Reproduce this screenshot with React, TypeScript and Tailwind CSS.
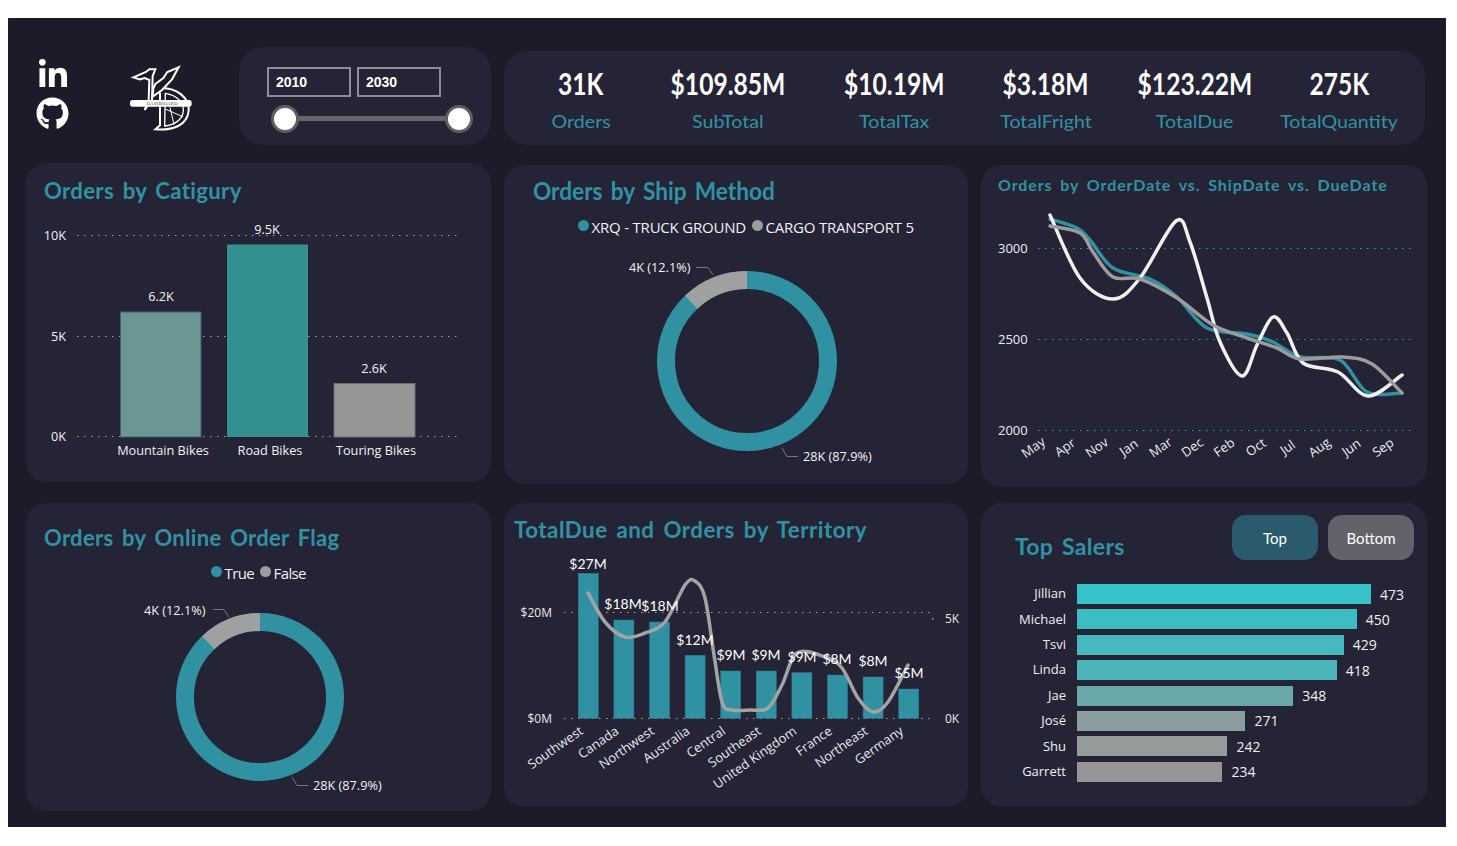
import { FaGithub, FaLinkedinIn } from "react-icons/fa";

type Pt = [number, number];

const TEAL = "#3091a3";
const GREY = "#9c9c9c";

const kpis = [
  { value: "31K", label: "Orders", width: "w-[147px]" },
  { value: "$109.85M", label: "SubTotal", width: "w-[147px]" },
  { value: "$10.19M", label: "TotalTax", width: "w-[185px]" },
  { value: "$3.18M", label: "TotalFright", width: "w-[119px]" },
  { value: "$123.22M", label: "TotalDue", width: "w-[179px]" },
  { value: "275K", label: "TotalQuantity", width: "w-[109px]" },
];

const salers = [
  { name: "Jillian", value: 473, color: "#37c3c9" },
  { name: "Michael", value: 450, color: "#3cbdc3" },
  { name: "Tsvi", value: 429, color: "#45b8c0" },
  { name: "Linda", value: 418, color: "#4bb5b9" },
  { name: "Jae", value: 348, color: "#69a8a8" },
  { name: "José", value: 271, color: "#8a9e9f" },
  { name: "Shu", value: 242, color: "#959a9b" },
  { name: "Garrett", value: 234, color: "#969696" },
];

const territories = [
  { name: "Southwest", top: 573.3, label: "$27M", lx: 588, ly: 564 },
  { name: "Canada", top: 620, label: "$18M", lx: 623, ly: 604 },
  { name: "Northwest", top: 622, label: "$18M", lx: 660, ly: 606 },
  { name: "Australia", top: 655.3, label: "$12M", lx: 695, ly: 640 },
  { name: "Central", top: 671, label: "$9M", lx: 731, ly: 655 },
  { name: "Southeast", top: 671, label: "$9M", lx: 766, ly: 655 },
  { name: "United Kingdom", top: 672.7, label: "$9M", lx: 802, ly: 657 },
  { name: "France", top: 675, label: "$8M", lx: 837, ly: 659 },
  { name: "Northeast", top: 677, label: "$8M", lx: 873, ly: 661 },
  { name: "Germany", top: 689, label: "$5M", lx: 909, ly: 673 },
];

const months = ["May", "Apr", "Nov", "Jan", "Mar", "Dec", "Feb", "Oct", "Jul", "Aug", "Jun", "Sep"];

const whiteLine: Pt[] = [[1050, 215], [1080, 278], [1113, 299], [1140, 278], [1176, 221], [1190, 242], [1207, 298], [1220, 342], [1242, 376], [1257, 345], [1273, 317], [1287, 333], [1303, 363], [1338, 372], [1368, 396], [1402, 375]];
const tealLine: Pt[] = [[1050, 219], [1077, 228], [1090, 240], [1113, 268], [1150, 279], [1177, 297], [1207, 328], [1247, 334], [1273, 342], [1300, 357], [1340, 360], [1367, 392], [1402, 393]];
const greyLine: Pt[] = [[1050, 226], [1080, 233], [1093, 252], [1113, 277], [1140, 279], [1177, 298], [1213, 325], [1247, 338], [1277, 348], [1300, 359], [1343, 357], [1372, 364], [1402, 393]];
const territoryLine: Pt[] = [[588, 593], [605, 622], [625, 637], [645, 633], [665, 622], [685, 585], [695, 581], [705, 598], [714, 655], [722, 702], [731, 710], [750, 710], [768, 708], [782, 685], [797, 653], [825, 657], [842, 668], [858, 698], [873, 712], [888, 702], [908, 665]];

// catmull-rom through the points, written out as cubic segments
function smooth(points: Pt[]) {
  let d = `M${points[0][0]} ${points[0][1]}`;
  for (let i = 0; i < points.length - 1; i++) {
    const p0 = points[Math.max(i - 1, 0)];
    const p1 = points[i];
    const p2 = points[i + 1];
    const p3 = points[Math.min(i + 2, points.length - 1)];
    d += ` C${p1[0] + (p2[0] - p0[0]) / 6} ${p1[1] + (p2[1] - p0[1]) / 6} ${p2[0] - (p3[0] - p1[0]) / 6} ${p2[1] - (p3[1] - p1[1]) / 6} ${p2[0]} ${p2[1]}`;
  }
  return d;
}

function Title({ children, className }: { children: string; className: string }) {
  return (
    <h2 className={`font-bold text-[#2f93a3] whitespace-nowrap origin-left [font-family:Lato,sans-serif] ${className}`}>
      {children}
    </h2>
  );
}

function Dot({ color }: { color: string }) {
  return <span className="w-[11px] h-[11px] rounded-full shrink-0 -mt-[3px]" style={{ background: color }} />;
}

function Donut({ cx, cy, r, width }: { cx: number; cy: number; r: number; width: number }) {
  const a = (12.1 / 100) * 2 * Math.PI;
  return (
    <g fill="none" strokeWidth={width}>
      <circle cx={cx} cy={cy} r={r} stroke={TEAL} />
      <path
        d={`M${cx} ${cy - r} A${r} ${r} 0 0 0 ${cx - r * Math.sin(a)} ${cy - r * Math.cos(a)}`}
        stroke="#9fa1a0"
      />
    </g>
  );
}

function Logo() {
  return (
    <svg viewBox="0 0 300 270" className="w-[100px] h-[90px] mt-[3px] ml-[41px] shrink-0">
      <g fill="#1c1b29" stroke="#fff" strokeWidth="6" strokeLinejoin="miter">
        <path d="M136 115 C205 106 240 150 236 182 C232 226 190 242 136 238 L150 226 L150 130 Z" />
        <path d="M166 130 C204 136 222 160 220 184 C216 212 190 226 164 228 Z" strokeWidth="4" />
        <path d="M70 82 L108 66 L118 58 L136 58 L128 78 L126 150 L104 180 L116 150 L118 90 L104 84 L90 88 Z" />
        <path d="M136 102 L160 84 L172 66 L206 52 L186 88 L156 120 L128 140 L130 116 Z" />
      </g>
      <path d="M168 178 L218 200 M180 172 L192 224" fill="none" stroke="#fff" strokeWidth="3" />
      <rect x="60" y="150" width="185" height="20" rx="8" fill="#fff" />
      <text x="156" y="166" textAnchor="middle" fontSize="15" fill="#55535c" className="[font-family:'Liberation_Serif',serif]">
        DASHBOARD
      </text>
    </svg>
  );
}

function CategoryChart() {
  return (
    <svg viewBox="26 219 465 263" className="block w-[465px] h-[263px] text-[12.7px] [font-family:'Open_Sans',sans-serif]">
      {[235.5, 336.5, 436.5].map((y) => (
        <line key={y} x1="77" x2="458" y1={y} y2={y} stroke="#a5a5ab" strokeDasharray="1.5 5.5" />
      ))}
      <rect x="120.5" y="312" width="80.5" height="125" fill="#6a9694" stroke="#47606a" />
      <rect x="227" y="244.5" width="81" height="192.5" fill="#33928f" />
      <rect x="334" y="383.5" width="81" height="53.5" fill="#969696" stroke="#6e6e72" />
      <g fill="#f2f2f2" textAnchor="end">
        <text x="66" y="240">10K</text>
        <text x="66" y="341">5K</text>
        <text x="66" y="441">0K</text>
      </g>
      <g fill="#f2f2f2" textAnchor="middle">
        <text x="161" y="301">6.2K</text>
        <text x="267" y="234">9.5K</text>
        <text x="374" y="373">2.6K</text>
        <text x="163" y="455">Mountain Bikes</text>
        <text x="270" y="455">Road Bikes</text>
        <text x="376" y="455">Touring Bikes</text>
      </g>
    </svg>
  );
}

function ShipChart() {
  return (
    <svg viewBox="504 237 464 247" className="block w-[464px] h-[247px] text-[12.7px] [font-family:'Open_Sans',sans-serif]">
      <Donut cx={747} cy={361} r={81} width={18} />
      <g fill="none" stroke="#77767d">
        <path d="M696 267.5 H708 L713 275" />
        <path d="M782 448 L787 456.5 H798" />
      </g>
      <g fill="#f2f2f2">
        <text x="629" y="272">4K (12.1%)</text>
        <text x="803" y="461">28K (87.9%)</text>
      </g>
    </svg>
  );
}

function DateChart() {
  return (
    <svg viewBox="981 205 446 282" className="block w-[446px] h-[282px] text-[13px] [font-family:'Open_Sans',sans-serif]">
      {[248.5, 339.5, 430.5].map((y) => (
        <line key={y} x1="1038" x2="1411" y1={y} y2={y} stroke="#2fa8ac" strokeDasharray="1.5 5.5" />
      ))}
      <g fill="none" strokeWidth="3.5" strokeLinecap="round">
        <path d={smooth(tealLine)} stroke={TEAL} />
        <path d={smooth(whiteLine)} stroke="#f0f0f0" />
        <path d={smooth(greyLine)} stroke={GREY} />
      </g>
      <g fill="#e8eef2">
        <text x="998" y="253">3000</text>
        <text x="998" y="344">2500</text>
        <text x="998" y="435">2000</text>
      </g>
      <g fill="#e8eef2" textAnchor="middle">
        {months.map((m, i) => {
          const x = 1033 + i * 31.8;
          return (
            <text key={m} x={x} y={452} transform={`rotate(-35 ${x} 447)`}>
              {m}
            </text>
          );
        })}
      </g>
    </svg>
  );
}

function OnlineChart() {
  return (
    <svg viewBox="26 583 465 228" className="block w-[465px] h-[228px] text-[12.7px] [font-family:'Open_Sans',sans-serif]">
      <Donut cx={260} cy={697} r={75} width={18} />
      <g fill="none" stroke="#77767d">
        <path d="M213 609.5 H224 L229 617" />
        <path d="M292 777 L297 785.5 H308" />
      </g>
      <g fill="#f2f2f2">
        <text x="144" y="615">4K (12.1%)</text>
        <text x="313" y="790">28K (87.9%)</text>
      </g>
    </svg>
  );
}

function TerritoryChart() {
  return (
    <svg viewBox="504 552 464 254" className="block w-[464px] h-[254px] text-[13px] [font-family:'Open_Sans',sans-serif]">
      <line x1="564" x2="932" y1="612.5" y2="612.5" stroke="#a5a5ab" strokeDasharray="1.5 5.5" />
      <line x1="564" x2="934" y1="718.5" y2="718.5" stroke="#a5a5ab" strokeDasharray="1.5 5.5" />
      <rect x="932" y="618" width="1.5" height="1.5" fill="#a5a5ab" />
      {territories.map((t, i) => (
        <rect
          key={t.name}
          x={578.3 + i * 35.6}
          y={t.top}
          width="20"
          height={718.3 - t.top}
          fill={TEAL}
          stroke="#2b7f90"
          strokeWidth="0.5"
        />
      ))}
      <path d={smooth(territoryLine)} fill="none" stroke="#a3a3a3" strokeWidth="3.5" strokeLinecap="round" />
      <g fill="#e8e8e8" className="text-[12px]">
        <text x="552" y="617" textAnchor="end">$20M</text>
        <text x="552" y="723" textAnchor="end">$0M</text>
        <text x="945" y="623">5K</text>
        <text x="945" y="723">0K</text>
      </g>
      <g fill="#fff" textAnchor="middle" className="text-[14px] [font-family:Lato,sans-serif]">
        {territories.map((t) => (
          <text key={t.name + t.lx} x={t.lx} y={t.ly + 5}>
            {t.label}
          </text>
        ))}
      </g>
      <g fill="#e4e8ec" textAnchor="end">
        {territories.map((t, i) => {
          const x = 584 + i * 35.6;
          return (
            <text key={t.name} x={x} y={733} transform={`rotate(-35 ${x} 733)`}>
              {t.name}
            </text>
          );
        })}
      </g>
    </svg>
  );
}

export default function App() {
  return (
    <div className="h-[846px] bg-white pt-[18px] pl-2 overflow-hidden">
      <div className="w-[1438px] h-[809px] bg-[#1c1b29] pt-[29px] pl-[18px]">
        {/* Top row */}
        <div className="flex h-[98px]">
          <div className="w-[33px] ml-[10px] flex flex-col items-center gap-[6px] pt-[12px] text-white shrink-0">
            <FaLinkedinIn className="w-[32px] h-[32px]" />
            <FaGithub className="w-[33px] h-[33px]" />
          </div>
          <Logo />
          <div className="ml-[29px] w-[252px] h-[98px] rounded-[24px] bg-[#252336] pl-[28px] pt-[20px] shrink-0">
            <div className="flex gap-[6px]">
              {["2010", "2030"].map((y) => (
                <div key={y} className="w-[84px] h-[30px] border-2 border-[#8e8d95] pl-[7px] flex items-center text-white text-[14px] font-bold [font-family:'Liberation_Sans',sans-serif]">
                  {y}
                </div>
              ))}
            </div>
            <div className="relative flex justify-between w-[202px] h-[28px] mt-[8px] ml-[4px]">
              <div className="absolute left-[14px] right-[14px] top-[11px] h-[5px] bg-[#66656a]" />
              <div className="relative w-[28px] h-[28px] rounded-full bg-white border-[3px] border-[#5f5e62]" />
              <div className="relative w-[28px] h-[28px] rounded-full bg-white border-[3px] border-[#5f5e62]" />
            </div>
          </div>
          <div className="ml-[13px] mt-[4px] w-[921px] h-[94px] rounded-[24px] bg-[#252336] pl-[3.5px] flex">
            {kpis.map((k) => (
              <div key={k.label} className={`${k.width} flex flex-col items-center`}>
                <div className="h-[42px] mt-[11px] flex items-center scale-x-[0.82] text-white text-[30px] font-bold whitespace-nowrap [font-family:Lato,sans-serif]">
                  {k.value}
                </div>
                <div className="h-[24px] mt-[5px] scale-x-[1.09] text-[#2f93a3] text-[18px] leading-[24px] whitespace-nowrap [font-family:Lato,sans-serif]">
                  {k.label}
                </div>
              </div>
            ))}
          </div>
        </div>

        {/* Middle row */}
        <div className="flex gap-[13px] mt-[18px] h-[324px] items-start">
          <div className="w-[465px] h-[319px] rounded-[20px] bg-[#252336] overflow-hidden">
            <div className="h-[56px] pl-[18px] flex items-center">
              <Title className="text-[22.2px] tracking-[0.3px] [word-spacing:3px]">Orders by Catigury</Title>
            </div>
            <CategoryChart />
          </div>
          <div className="w-[464px] h-[319px] mt-[2px] rounded-[20px] bg-[#252336] overflow-hidden">
            <div className="h-[52px] pl-[29px] flex items-center">
              <Title className="text-[25px] scale-x-[0.906] [word-spacing:3px]">Orders by Ship Method</Title>
            </div>
            <div className="h-[20px] pl-[73.5px] flex items-center gap-[3px] text-[15px] text-[#f2f2f2] whitespace-nowrap [font-family:'Open_Sans',sans-serif] tracking-[-0.2px]">
              <Dot color={TEAL} />
              <span className="w-[157px]">XRQ - TRUCK GROUND</span>
              <Dot color={GREY} />
              <span>CARGO TRANSPORT 5</span>
            </div>
            <ShipChart />
          </div>
          <div className="w-[446px] h-[322px] mt-[2px] rounded-[20px] bg-[#252336] overflow-hidden">
            <div className="h-[40px] pl-[17px] flex items-center">
              <Title className="text-[16px] tracking-[0.9px] [word-spacing:3px]">Orders by OrderDate vs. ShipDate vs. DueDate</Title>
            </div>
            <DateChart />
          </div>
        </div>

        {/* Bottom row */}
        <div className="flex gap-[13px] mt-[16px] items-start">
          <div className="w-[465px] h-[308px] rounded-[20px] bg-[#252336] overflow-hidden">
            <div className="h-[60px] pt-[8px] pl-[18px] flex items-center">
              <Title className="text-[22px] tracking-[0.3px] [word-spacing:3px]">Orders by Online Order Flag</Title>
            </div>
            <div className="h-[20px] pl-[184.5px] flex items-center gap-[3px] text-[15px] text-[#f2f2f2] whitespace-nowrap [font-family:'Open_Sans',sans-serif] tracking-[-0.6px]">
              <Dot color={TEAL} />
              <span className="w-[32px]">True</span>
              <Dot color={GREY} />
              <span>False</span>
            </div>
            <OnlineChart />
          </div>
          <div className="w-[464px] h-[303px] rounded-[20px] bg-[#252336] overflow-hidden">
            <div className="h-[49px] pt-[4px] pl-[10px] flex items-center">
              <Title className="text-[22.3px] tracking-[0.5px] [word-spacing:3px]">TotalDue and Orders by Territory</Title>
            </div>
            <TerritoryChart />
          </div>
          <div className="w-[446px] h-[303px] rounded-[20px] bg-[#252336] overflow-hidden">
            <div className="flex h-[57px] pt-[12px] pl-[34px] pr-[13px]">
              <div className="mt-[15px] h-[32px] flex items-center">
                <Title className="text-[23px] tracking-[0.3px] [word-spacing:3px]">Top Salers</Title>
              </div>
              <button className="ml-auto w-[86px] h-[45px] pt-[2px] rounded-[14px] bg-[#2a5b6c] text-white text-[15px] [font-family:Lato,sans-serif]">Top</button>
              <button className="ml-[10px] w-[86px] h-[45px] pt-[2px] rounded-[14px] bg-[#636169] text-white text-[15px] [font-family:Lato,sans-serif]">Bottom</button>
            </div>
            <div className="mt-[24px] flex flex-col gap-[5.4px] text-[14px] text-[#f0f0f0] [font-family:'Open_Sans',sans-serif]">
              {salers.map((s) => (
                <div key={s.name} className="flex items-center h-[20px]">
                  <span className="w-[85px] text-right text-[13px]">{s.name}</span>
                  <div className="ml-[11px] h-full" style={{ width: (s.value / 473) * 294, background: s.color }} />
                  <span className="ml-[9px]">{s.value}</span>
                </div>
              ))}
            </div>
          </div>
        </div>
      </div>
    </div>
  );
}
